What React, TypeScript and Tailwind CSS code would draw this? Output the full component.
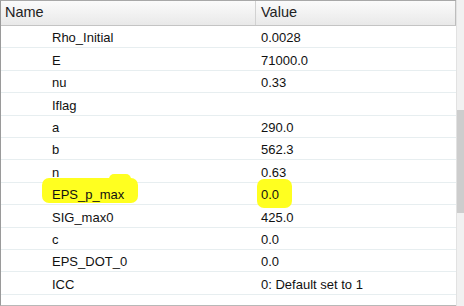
import React from "react";

type Row = { name: string; value: string; mark?: boolean };

const rows: Row[] = [
  { name: "Rho_Initial", value: "0.0028" },
  { name: "E", value: "71000.0" },
  { name: "nu", value: "0.33" },
  { name: "Iflag", value: "" },
  { name: "a", value: "290.0" },
  { name: "b", value: "562.3" },
  { name: "n", value: "0.63" },
  { name: "EPS_p_max", value: "0.0", mark: true },
  { name: "SIG_max0", value: "425.0" },
  { name: "c", value: "0.0" },
  { name: "EPS_DOT_0", value: "0.0" },
  { name: "ICC", value: "0: Default set to 1" },
];

export default function App() {
  return (
    <div
      className="w-[464px] h-[306px] bg-white flex overflow-hidden text-[13px] text-[#111]"
      style={{ fontFamily: '"Liberation Sans", Arial, sans-serif' }}
    >
      <div className="flex-1 flex flex-col border-l border-t border-b border-l-[#9a9a9a] border-t-[#a8a8a8] border-b-[#b8b8b8]">
        {/* column header */}
        <div className="flex h-[25px] border-b border-[#c4c4c4] bg-gradient-to-b from-[#fbfbfb] to-[#e9e9e9] border-r border-r-[#bdbdbd]">
          <div className="w-[255px] pl-[4px] flex items-center border-r border-[#d2d2d2] text-[14.5px] text-[#222]">
            Name
          </div>
          <div className="flex-1 pl-[5px] flex items-center text-[14.5px] text-[#222]">Value</div>
        </div>
        {/* property rows */}
        <div className="flex flex-col">
          {rows.map((r) => (
            <div key={r.name} className="flex h-[22.4px] border-b border-[#e7eef0] items-center pt-[3px]">
              <div className="w-[256px] pl-[51px] relative">
                {r.mark && (
                  <>
                    <span className="absolute left-[41px] top-[-7px] w-[96px] h-[25px] bg-[#ffff20] rounded-[7px]" />
                    <span className="absolute left-[108px] top-[-11px] w-[22px] h-[8px] bg-[#ffff20] rounded-t-[5px]" />
                  </>
                )}
                <span className="relative">{r.name}</span>
              </div>
              <div className="flex-1 pl-[4px] relative">
                {r.mark && (
                  <span className="absolute left-[0px] top-[-6px] w-[35px] h-[29px] bg-[#ffff20] rounded-[7px]" />
                )}
                <span className="relative">{r.value}</span>
              </div>
            </div>
          ))}
        </div>
      </div>
      {/* vertical scrollbar */}
      <div className="w-[8px] h-full bg-[#f1f1f1] border-l border-[#e2e2e2] flex flex-col">
        <div className="h-[110px]" />
        <div className="h-[103px] bg-[#cdcdcd]" />
      </div>
    </div>
  );
}
